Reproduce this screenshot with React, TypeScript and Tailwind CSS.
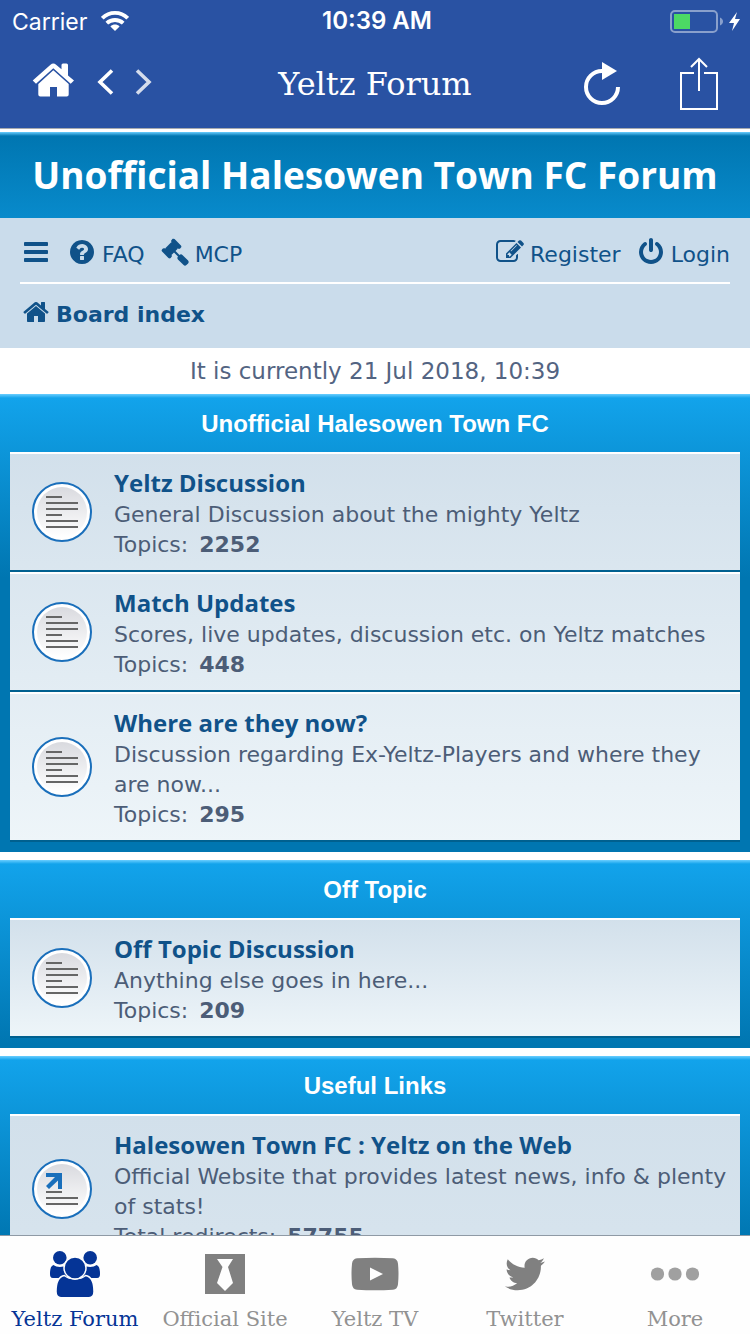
import type { ReactNode } from "react";
import { FaTwitter } from "react-icons/fa";

const ICONS = {
  home: "M1472 992v480q0 26-19 45t-45 19h-384v-384h-256v384h-384q-26 0-45-19t-19-45v-480q0-1 .5-3t.5-3l575-474 575 474q1 2 1 6zm223-69l-62 74q-8 9-21 11h-3q-13 0-21-7l-692-577-692 577q-12 8-24 7-13-2-21-11l-62-74q-8-10-7-23.5t11-21.5l719-599q32-26 76-26t76 26l244 204v-195q0-14 9-23t23-9h192q14 0 23 9t9 23v408l219 182q10 8 11 21.5t-7 23.5z",
  gavel:
    "M1771 1536q0 53-37 90l-107 108q-39 37-91 37-53 0-90-37l-363-364q-38-36-38-90 0-53 43-96l-256-256-126 126q-14 14-34 14t-34-14q2 2 12.5 12t12.5 13 10 11.5 10 13.5 6 13.5 5.5 16.5 1.5 18q0 38-28 68-3 3-16.5 18t-19 20.5-18.5 16.5-22 15.5-22 9-26 4.5q-40 0-68-28l-408-408q-28-28-28-68 0-13 4.5-26t9-22 15.5-22 16.5-18.5 20.5-19 18-16.5q30-28 68-28 10 0 18 1.5t16.5 5.5 13.5 6 13.5 10 11.5 10 13 12.5 12 12.5q-14-14-14-34t14-34l348-348q14-14 34-14t34 14q-2-2-12.5-12t-12.5-13-10-11.5-10-13.5-6-13.5-5.5-16.5-1.5-18q0-38 28-68 3-3 16.5-18t19-20.5 18.5-16.5 22-15.5 22-9 26-4.5q40 0 68 28l408 408q28 28 28 68 0 13-4.5 26t-9 22-15.5 22-16.5 18.5-20.5 19-18 16.5q-30 28-68 28-10 0-18-1.5t-16.5-5.5-13.5-6-13.5-10-11.5-10-13-12.5-12-12.5q14 14 14 34t-14 34l-126 126 256 256q43-43 96-43 52 0 91 37l363 363q37 39 37 91z",
  question:
    "M1024 1376v-192q0-14-9-23t-23-9h-192q-14 0-23 9t-9 23v192q0 14 9 23t23 9h192q14 0 23-9t9-23zm256-672q0-88-55.5-163t-138.5-116-170-41q-243 0-371 213-15 24 8 42l132 100q7 6 19 6 16 0 25-12 53-68 86-92 34-24 86-24 48 0 85.5 26t37.5 59q0 38-20 61t-68 45q-63 28-115.5 86.5t-52.5 125.5v36q0 14 9 23t23 9h192q14 0 23-9t9-23q0-19 21.5-49.5t54.5-49.5q32-18 49-28.5t46-35 44.5-48 28-60.5 12.5-81zm384 192q0 209-103 385.5t-279.5 279.5-385.5 103-385.5-103-279.5-279.5-103-385.5 103-385.5 279.5-279.5 385.5-103 385.5 103 279.5 279.5 103 385.5z",
  power:
    "M1664 896q0 156-61 298t-164 245-245 164-298 61-298-61-245-164-164-245-61-298q0-182 80.5-343t226.5-270q43-32 95.5-25t83.5 50q32 42 24.5 94.5t-49.5 84.5q-98 74-151.5 181t-53.5 228q0 104 40.5 198.5t109.5 163.5 163.5 109.5 198.5 40.5 198.5-40.5 163.5-109.5 109.5-163.5 40.5-198.5q0-121-53.5-228t-151.5-181q-42-32-49.5-84.5t24.5-94.5q31-43 84-50t95 25q146 109 226.5 270t80.5 343zm-640-768v640q0 52-38 90t-90 38-90-38-38-90v-640q0-52 38-90t90-38 90 38 38 90z",
  edit: "M888 1184l116-116-152-152-116 116v56h96v96h56zm440-720q-16-16-33 1l-350 350q-17 17-1 33t33-1l350-350q17-17 1-33zm80 594v190q0 119-84.5 203.5t-203.5 84.5h-832q-119 0-203.5-84.5t-84.5-203.5v-832q0-119 84.5-203.5t203.5-84.5h832q63 0 117 25 15 7 18 23 3 17-9 29l-49 49q-14 14-32 8-23-6-45-6h-832q-66 0-113 47t-47 113v832q0 66 47 113t113 47h832q66 0 113-47t47-113v-126q0-13 9-22l64-64q15-15 35-7t20 29zm-96-738l288 288-672 672h-288v-288zm444 132l-92 92-288-288 92-92q28-28 68-28t68 28l152 152q28 28 28 68t-28 68z",
  bars: "M1664 1344v128q0 26-19 45t-45 19h-1408q-26 0-45-19t-19-45v-128q0-26 19-45t45-19h1408q26 0 45 19t19 45zm0-512v128q0 26-19 45t-45 19h-1408q-26 0-45-19t-19-45v-128q0-26 19-45t45-19h1408q26 0 45 19t19 45zm0-512v128q0 26-19 45t-45 19h-1408q-26 0-45-19t-19-45v-128q0-26 19-45t45-19h1408q26 0 45 19t19 45z",
};

function Icon({ name, className = "size-7" }: { name: keyof typeof ICONS; className?: string }) {
  return (
    <svg viewBox="0 0 1792 1792" className={`shrink-0 ${className}`} fill="currentColor" aria-hidden="true">
      <path d={ICONS[name]} />
    </svg>
  );
}

function StatusBar() {
  return (
    <div className="grid h-10 grid-cols-3 items-center pr-2 pl-3 font-['Inter',sans-serif] text-[23px] leading-10">
      <div className="flex items-center gap-[14px]">
        <span className="pt-[2px]">Carrier</span>
        <svg viewBox="0 0 28 20" className="h-5 w-7" aria-hidden="true">
          <g fill="none" stroke="#fff" strokeWidth="3.8">
            <path d="M1.300 7.200C8.300.2 19.700.2 26.700 7.200" />
            <path d="M5.800 12.200C10.300 7.900 17.700 7.900 22.200 12.200" />
          </g>
          <path d="M14 20l-4.600-4.600c2.700-2.400 6.500-2.400 9.200 0z" fill="#fff" />
        </svg>
      </div>
      <span className="text-center text-2xl leading-10 font-semibold">10:39 AM</span>
      <svg viewBox="0 0 72 24" className="h-6 w-[72px] justify-self-end" aria-hidden="true">
        <rect x="1" y="2" width="46" height="21" rx="4" fill="none" stroke="#fff" strokeOpacity=".45" strokeWidth="2" />
        <rect x="4" y="5" width="16" height="15" fill="#4cd964" />
        <path d="M50 8.500c4 1.500 4 6.500 0 8z" fill="#fff" fillOpacity=".45" />
        <path d="M67 3L59 14h5l-2 8 8-12h-5z" fill="#fff" />
      </svg>
    </div>
  );
}

function NavBar() {
  return (
    <div className="grid h-[88px] grid-cols-3 items-center px-[30px]">
      <div className="flex items-center pb-1">
        <button type="button" aria-label="Home" className="-mt-1">
          <svg viewBox="0 0 46 36" className="h-9 w-[46px]" fill="#fff" aria-hidden="true">
            <path d="M23.300 1.500q1.400 0 2.800 1.200l5.400 4.600V3q0-1.500 1.500-1.500h3.500q1.500 0 1.500 1.500v10.500l6 5-3.300 3.300L23.300 6.300 6 21.800 2.700 18.500 20.500 2.700q1.400-1.200 2.800-1.200z" />
            <path d="M23.300 8.300L38.700 22v10.500q0 2-2 2H27V25h-7v9.500H10.300q-2 0-2-2V22z" />
          </svg>
        </button>
        <button type="button" aria-label="Back" className="ml-5">
          <svg viewBox="0 0 18 28" className="h-7 w-[18px]" fill="none" stroke="#fff" strokeWidth="3.6">
            <path d="M16 2.500L4 14l12 11.500" />
          </svg>
        </button>
        <button type="button" aria-label="Forward" className="ml-5 opacity-80">
          <svg viewBox="0 0 18 28" className="h-7 w-[18px]" fill="none" stroke="#fff" strokeWidth="3.6">
            <path d="M3 2.500L15 14L3 25.500" />
          </svg>
        </button>
      </div>
      <h1 className="text-center font-['DejaVu_Serif',serif] text-[32px] leading-10 whitespace-nowrap">Yeltz Forum</h1>
      <div className="flex items-center justify-end gap-[57px]">
        <button type="button" aria-label="Reload">
          <svg viewBox="0 0 38 46" className="h-[46px] w-[38px]">
            <path d="M19 10a16 16 0 1 0 16 16" fill="none" stroke="#fff" strokeWidth="4" />
            <path d="M19 1v18l15-9z" fill="#fff" />
          </svg>
        </button>
        <button type="button" aria-label="Share">
          <svg viewBox="0 0 42 54" className="h-[54px] w-[42px]" fill="none" stroke="#fff" strokeWidth="2">
            <path d="M16 16H3v36h36V16H26M21 34V2M13 10l8-8 8 8" />
          </svg>
        </button>
      </div>
    </div>
  );
}

function BoardLink({ icon, children, bold = false }: { icon: keyof typeof ICONS; children: ReactNode; bold?: boolean }) {
  return (
    <a href="#board" className={bold ? "flex items-center gap-[6px] font-bold" : "flex items-center gap-[6px]"}>
      <Icon name={icon} className="-mt-[6px] size-7" />
      {children}
    </a>
  );
}

function BoardNav() {
  return (
    <nav className="bg-[#cadceb] px-5 leading-7 text-[#105289]">
      <div className="flex h-[66px] items-center justify-between border-b-2 border-white pt-[10px]">
        <div className="flex items-center gap-4">
          <button type="button" aria-label="Quick links" className="mx-[2px]">
            <Icon name="bars" className="-mt-[6px] size-7" />
          </button>
          <BoardLink icon="question">FAQ</BoardLink>
          <BoardLink icon="gavel">MCP</BoardLink>
        </div>
        <div className="flex items-center gap-4">
          <BoardLink icon="edit">Register</BoardLink>
          <BoardLink icon="power">Login</BoardLink>
        </div>
      </div>
      <div className="flex h-16 items-center pb-[2px] pl-[2px]">
        <BoardLink icon="home" bold>
          Board index
        </BoardLink>
      </div>
    </nav>
  );
}

function ForumIcon({ link = false }: { link?: boolean }) {
  return (
    <svg viewBox="0 0 60 60" className="size-[60px] shrink-0" aria-hidden="true">
      <defs>
        <linearGradient id="disc" x1="0" y1="0" x2="0" y2="1">
          <stop offset="0" stopColor="#d9dadf" />
          <stop offset="1" stopColor="#fff" />
        </linearGradient>
      </defs>
      <circle cx="30" cy="30" r="29" fill="#fff" stroke="#1a6fbb" strokeWidth="2" />
      <circle cx="30" cy="30" r="25" fill="url(#disc)" />
      {link ? (
        <>
          <path d="M14 14h16v16h-4v-8.500L17 30l-3-3 9-9h-9z" fill="#1a6fbb" />
          <path d="M14 33h16M14 39h32M14 45h32" stroke="#666" strokeWidth="2" />
        </>
      ) : (
        <path d="M14 15h16M14 21h32M14 27h32M14 33h16M14 39h32M14 45h32" stroke="#666" strokeWidth="2" />
      )}
    </svg>
  );
}

type Forum = { title: string; text: string; label: string; count: string; link?: boolean };

const SECTIONS: { name: string; forums: Forum[] }[] = [
  {
    name: "Unofficial Halesowen Town FC",
    forums: [
      { title: "Yeltz Discussion", text: "General Discussion about the mighty Yeltz", label: "Topics:", count: "2252" },
      { title: "Match Updates", text: "Scores, live updates, discussion etc. on Yeltz matches", label: "Topics:", count: "448" },
      { title: "Where are they now?", text: "Discussion regarding Ex-Yeltz-Players and where they are now...", label: "Topics:", count: "295" },
    ],
  },
  {
    name: "Off Topic",
    forums: [{ title: "Off Topic Discussion", text: "Anything else goes in here...", label: "Topics:", count: "209" }],
  },
  {
    name: "Useful Links",
    forums: [
      {
        title: "Halesowen Town FC : Yeltz on the Web",
        text: "Official Website that provides latest news, info & plenty of stats!",
        label: "Total redirects:",
        count: "57755",
        link: true,
      },
    ],
  },
];

function Section({ name, forums, tall }: { name: string; forums: Forum[]; tall: boolean }) {
  return (
    <section className="bg-[linear-gradient(to_bottom,#6aceff_0px,#12a3eb_4px,#0076b1_184px)] px-[10px] pb-[10px]">
      <h3 className="pt-[15px] pb-[13px] text-center font-['Liberation_Sans',sans-serif] text-2xl leading-[30px] font-bold text-white">
        {name}
      </h3>
      <ul className={tall ? "min-h-[800px] bg-linear-to-b from-[#d2e0eb] to-[#eef5f9]" : "bg-linear-to-b from-[#d2e0eb] to-[#eef5f9]"}>
        {forums.map((f) => (
          <li
            key={f.title}
            className="flex items-center gap-[22px] border-t-2 border-b-2 border-t-white border-b-[#00608f] pl-[22px] leading-[30px]"
          >
            <ForumIcon link={f.link} />
            <div className="min-w-0 flex-1 pt-[14px] pb-[10px]">
              <h4 className="pb-[2px] font-['Open_Sans',sans-serif] text-2xl leading-[30px] font-bold text-[#105289]">
                <a href="#forum">{f.title}</a>
              </h4>
              <p>{f.text}</p>
              <p>
                {f.label} <strong className="ml-1">{f.count}</strong>
              </p>
            </div>
          </li>
        ))}
      </ul>
    </section>
  );
}

function PeopleIcon() {
  return (
    <svg viewBox="0 0 52 48" className="h-12 w-[52px]" aria-hidden="true">
      <g fill="currentColor">
        <circle cx="10.800" cy="7.800" r="6.800" />
        <circle cx="41.200" cy="7.800" r="6.800" />
        <path d="M4.500 15c3 2.500 9.500 2.500 13.500 0v13H4c-2.500 0-3-2-3-4 0-4 .5-8 3.500-9zM47.500 15c-3 2.500-9.500 2.500-13.500 0v13h14c2.500 0 3-2 3-4 0-4-.5-8-3.500-9z" />
        <g stroke="#fefefe" strokeWidth="1.500">
          <path d="M15.500 25.500c5 4.500 16 4.500 21 0 6 1 8.500 7 8.500 16 0 4-2 6.200-5 6.200H12c-3 0-5-2.200-5-6.200 0-9 2.500-15 8.500-16z" />
          <circle cx="26" cy="18" r="11" />
        </g>
      </g>
    </svg>
  );
}

function TieIcon() {
  return (
    <svg viewBox="0 0 40 40" className="size-10" aria-hidden="true">
      <path d="M0 0h40v40H0z" fill="currentColor" />
      <path d="M12 5h16l-5 8 5 16-8 8-8-8 5.500-16z" fill="#fefefe" />
    </svg>
  );
}

function TvIcon() {
  return (
    <svg viewBox="0 0 48 34" className="h-[34px] w-12" aria-hidden="true">
      <path d="M6 1.300Q24 0 42 1.300q4.500.5 5 5.500 1 10.200 0 20.400-.5 5-5 5.500Q24 34 6 32.700q-4.500-.5-5-5.500-1-10.200 0-20.400.5-5 5-5.500z" fill="currentColor" />
      <path d="M19 10.500v13l13-6.500z" fill="#fefefe" />
    </svg>
  );
}

function MoreIcon() {
  return (
    <svg viewBox="0 0 50 14" className="h-[14px] w-[50px] text-[#a0a0a0]" fill="currentColor" aria-hidden="true">
      <circle cx="7.500" cy="7" r="6.600" />
      <circle cx="25" cy="7" r="6.600" />
      <circle cx="42.500" cy="7" r="6.600" />
    </svg>
  );
}

const TABS = [
  { label: "Yeltz Forum", icon: <PeopleIcon />, active: true },
  { label: "Official Site", icon: <TieIcon /> },
  { label: "Yeltz TV", icon: <TvIcon /> },
  { label: "Twitter", icon: <FaTwitter className="size-[40px]" aria-hidden="true" /> },
  { label: "More", icon: <MoreIcon /> },
];

function TabBar() {
  return (
    <nav className="grid shrink-0 grid-cols-5 border-t border-[#8f9aa5] bg-[#fefefe] pt-3 font-['DejaVu_Serif',serif] text-[21px] leading-[30px]">
      {TABS.map((t) => (
        <button
          key={t.label}
          type="button"
          className={
            t.active
              ? "flex flex-col items-center gap-1 whitespace-nowrap text-[#053496]"
              : "flex flex-col items-center gap-1 whitespace-nowrap text-[#929292]"
          }
        >
          <span className={t.active ? "flex h-[52px] items-center" : "flex h-[52px] items-center text-[#808080]"}>{t.icon}</span>
          {t.label}
        </button>
      ))}
    </nav>
  );
}

export default function App() {
  return (
    <div className="flex h-screen flex-col overflow-hidden bg-white font-['DejaVu_Sans',sans-serif] text-[22px] text-[#4c5d77]">
      <header className="shrink-0 border-b border-[#a7aaaf] bg-[#2952a3] text-white">
        <StatusBar />
        <NavBar />
      </header>
      <main className="min-h-0 flex-1 overflow-y-auto pt-[3px] [scrollbar-width:none]">
        <h2 className="bg-[linear-gradient(to_bottom,#6aceff_0px,#0076b1_4px,#12a3eb_184px)] py-[18px] text-center font-['Open_Sans',sans-serif] text-[37px] leading-[50px] font-bold whitespace-nowrap text-white">
          Unofficial Halesowen Town FC Forum
        </h2>
        <BoardNav />
        <p className="py-2 text-center text-[23px] leading-[30px] text-[#536482]">It is currently 21 Jul 2018, 10:39</p>
        <div className="flex flex-col gap-2">
          {SECTIONS.map((s, i) => (
            <Section key={s.name} name={s.name} forums={s.forums} tall={i === SECTIONS.length - 1} />
          ))}
        </div>
      </main>
      <TabBar />
    </div>
  );
}
